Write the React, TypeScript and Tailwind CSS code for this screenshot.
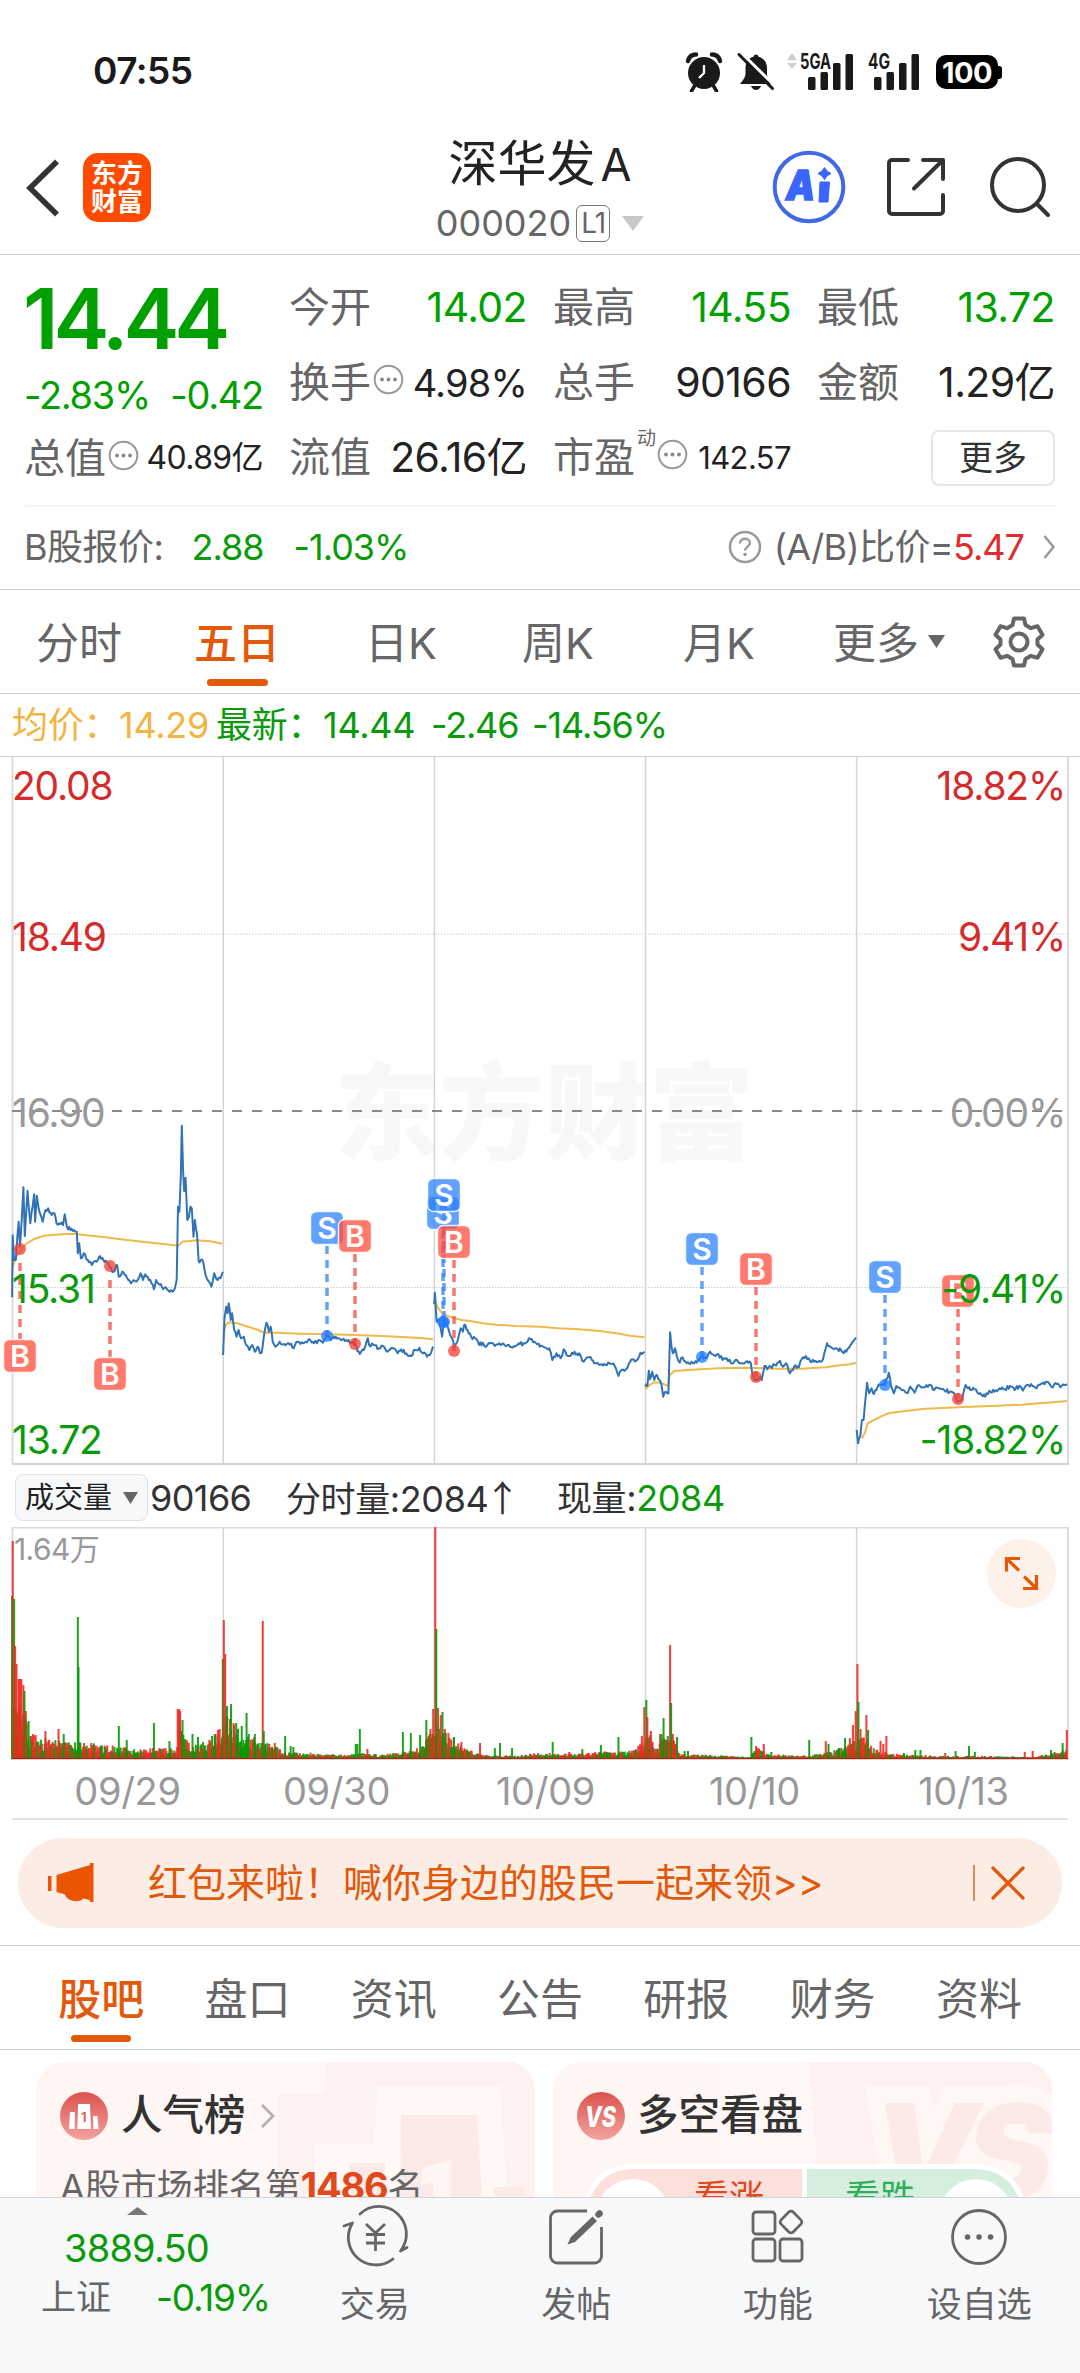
import type { ReactNode } from 'react';

const FONT = 'font-["Inter","Noto_Sans_CJK_SC",sans-serif]';

/* ---------- chart data ---------- */

type Point = [number, number];

// Samples are stored on a fine grid, HALF is the offset of the second half of the window
const HALF = 1568;
const toX = (x: number) => x / 2.904;
const toY = (y: number) => 1080 + y / 3;

const parse = (raw: string, offset = 0): Point[] =>
  raw.trim().split(/\s+/).map((pair) => {
    const [x, y] = pair.split(',').map(Number);
    return [toX(x + offset), toY(y)];
  });

const makeRandom = (seed: number) => {
  let s = seed;
  return () => {
    s = (s * 16807) % 2147483647;
    return s / 2147483647;
  };
};

const priceDays: Point[][] = [
  parse(`35,652 37,466 41,540 46,540 54,425 58,500 63,420 68,322 72,468 80,332 88,430 99,343 102,425 107,347 112,385 120,410
    124,425 132,390 140,385 150,405 158,400 164,430 172,430 183,435 188,403 194,440 205,450 215,450 223,455 226,520 230,490
    235,535 243,520 255,540 262,545 267,555 280,545 290,528 300,540 310,545 318,560 330,575 340,555 345,590 355,575 365,585
    380,610 388,600 400,600 408,580 415,600 422,583 432,600 440,610 447,628 453,600 460,610 470,620 485,628 500,635 508,625
    513,600 517,380 521,395 525,290 528,137 532,280 535,333 539,293 544,420 549,410 553,380 557,385 562,470 566,420 572,460
    577,545 583,540 590,545 597,585 603,600 614,620 622,580 628,597 640,595 647,575`),
  parse(`648,825 652,715 657,680 661,700 664,670 670,720 674,700 680,750 687,770 693,750 700,775 708,770 715,795 724,810 733,795
    740,815 748,800 755,820 760,818 766,770 774,728 781,755 786,740 792,785 800,800 812,785 825,792 838,790 853,805 865,785
    880,790 895,780 912,790 925,780 938,788 949,765 960,780 975,770 990,780 1005,780 1020,788 1031,795 1045,822 1060,802
    1068,775 1072,795 1085,795 1100,805 1115,800 1125,815 1140,805 1155,820 1165,808 1180,820 1195,828 1205,810 1218,803
    1228,820 1240,830 1252,818 1258,800`),
  parse(`1261,672 1263,638 1268,725 1276,725 1284,770 1290,715 1300,740 1307,765 1315,780 1320,800 1328,785 1338,745 1344,755
    1348,735 1358,750 1368,770 1380,775 1392,795 1402,788 1412,800 1425,790 1437,798 1450,790 1465,795 1478,795 1488,803
    1503,795 1520,790 1540,778 1560,793 1580,802 1595,805 1604,840 1616,820 1628,835 1637,808 1645,825 1665,822 1682,820
    1695,845 1708,832 1722,842 1740,855 1755,852 1770,850 1785,858 1796,888 1805,870 1818,868 1830,845 1840,838 1848,842
    1860,818 1872,815`),
  parse(`306,920 312,918 316,872 320,898 326,875 332,900 340,885 347,900 353,915 358,950 366,935 373,940 376,830 378,757 382,800
    386,820 392,805 398,830 406,848 414,832 426,850 440,845 455,848 470,830 482,835 494,815 505,825 518,822 530,840 542,835
    555,850 568,840 582,850 598,845 612,848 618,885 626,900 636,893 644,900 652,858 660,868 670,860 682,855 697,842 706,860
    715,850 726,880 738,860 752,862 760,838 772,828 785,845 800,842 815,845 822,838 834,790 845,802 860,805 875,812 890,815
    900,798 918,773`, HALF),
  parse(`920,1050 924,1090 930,1070 935,1020 940,1020 944,970 950,908 956,940 963,925 970,942 980,922 990,915 1002,915 1013,878
    1020,920 1028,940 1035,918 1050,930 1068,940 1075,920 1088,938 1100,915 1115,922 1130,915 1145,930 1160,925 1175,932
    1190,935 1203,940 1212,965 1224,960 1236,915 1250,930 1262,928 1275,942 1293,950 1305,932 1320,935 1335,925 1350,928
    1365,918 1378,930 1392,918 1402,932 1415,915 1430,918 1442,925 1455,912 1472,905 1485,920 1500,912 1515,918 1531,912`, HALF),
];

const averageDays: Point[][] = [
  parse('38,560 45,535 58,515 75,492 100,477 125,468 155,464 215,461 250,466 300,471 350,478 420,486 480,493 517,497 530,485 570,481 610,484 647,491'),
  parse('650,755 656,735 664,727 690,730 720,740 750,750 766,758 800,758 870,761 950,763 1030,765 1110,768 1180,772 1230,775 1258,778'),
  parse('1263,660 1270,680 1284,700 1310,712 1340,720 1370,724 1400,730 1440,734 1500,738 1570,740 1620,745 1680,748 1740,753 1790,760 1830,767 1872,772'),
  parse('306,928 318,915 332,907 350,908 372,918 377,885 390,873 440,869 520,865 600,863 680,866 760,866 830,862 870,856 900,853 918,848', HALF),
  parse('935,1075 943,1060 952,1030 985,1012 1012,1000 1060,993 1120,986 1230,981 1330,977 1400,974 1450,970 1490,967 1531,963', HALF),
];

const round = (n: number) => n.toFixed(1);
const toPath = (pts: Point[]) => pts.map(([x, y], i) => `${i ? 'L' : 'M'}${round(x)} ${round(y)}`).join('');

// minute ticks between two samples
const withTicks = (pts: Point[], seed: number): Point[] => {
  const rnd = makeRandom(seed);
  const out: Point[] = [pts[0]];
  for (let i = 1; i < pts.length; i++) {
    const [x0, y0] = pts[i - 1];
    const [x1, y1] = pts[i];
    const steps = Math.max(1, Math.round((x1 - x0) / 1.3));
    for (let k = 1; k < steps; k++) {
      const t = k / steps;
      out.push([x0 + (x1 - x0) * t, y0 + (y1 - y0) * t + (rnd() - 0.5) * 4]);
    }
    out.push([x1, y1]);
  }
  return out;
};

const RED = '#ee2a24';
const GREEN = '#079807';

// [x, height] of the usual volume
const volumeBase: Point[] = [
  [35, 50], [70, 48], [85, 24], [120, 20], [180, 17], [240, 16], [300, 14], [340, 12], [400, 9], [480, 11], [512, 9], [520, 35], [540, 18],
  [570, 13], [600, 18], [645, 28], [655, 42], [690, 28], [740, 20], [790, 14], [830, 6], [900, 6], [1000, 4], [1060, 6], [1100, 4], [1180, 7],
  [1220, 12], [1250, 24], [1285, 35], [1310, 22], [1350, 11], [1400, 4], [1500, 3], [1568, 6], [1620, 5], [1680, 5], [1750, 7], [1840, 8],
  [1868, 16], [1885, 24], [1905, 9], [1930, 22], [1955, 20], [1975, 5], [2050, 4], [2180, 2], [2195, 12], [2225, 5], [2320, 3], [2390, 5],
  [2420, 8], [2470, 14], [2510, 24], [2540, 10], [2590, 5], [2640, 4], [2750, 3], [2840, 3], [2990, 2], [3030, 4], [3080, 9], [3099, 9],
];

const volumeSpikes: [number, number, 'r' | 'g'][] = [
  [35, 163, 'g'], [37, 218, 'r'], [41, 160, 'g'], [44, 113, 'r'], [48, 95, 'r'], [54, 80, 'r'], [58, 80, 'r'], [62, 80, 'r'], [68, 74, 'r'],
  [71, 68, 'g'], [75, 48, 'r'], [83, 38, 'g'], [132, 28, 'r'], [170, 30, 'r'], [185, 25, 'g'], [226, 142, 'g'], [228, 92, 'g'],
  [345, 33, 'g'], [368, 19, 'g'], [447, 36, 'g'], [492, 18, 'g'], [516, 50, 'r'], [520, 50, 'r'], [523, 48, 'r'], [530, 39, 'g'],
  [559, 25, 'g'], [575, 22, 'g'], [625, 23, 'g'], [633, 29, 'r'], [638, 30, 'r'], [647, 100, 'g'], [650, 139, 'r'], [654, 105, 'r'],
  [659, 53, 'g'], [671, 55, 'g'], [680, 34, 'r'], [686, 36, 'g'], [702, 33, 'g'], [716, 46, 'g'], [740, 25, 'g'], [763, 138, 'r'],
  [766, 28, 'g'], [798, 16, 'r'], [828, 23, 'g'], [844, 13, 'g'], [852, 12, 'g'], [1033, 15, 'g'], [1038, 15, 'g'], [1045, 30, 'g'],
  [1067, 10, 'r'], [1170, 27, 'g'], [1193, 26, 'g'], [1220, 24, 'g'], [1238, 39, 'g'], [1250, 30, 'r'], [1258, 50, 'r'], [1264, 232, 'r'],
  [1267, 130, 'g'], [1272, 51, 'r'], [1280, 44, 'r'], [1285, 47, 'g'], [1318, 22, 'g'], [1340, 17, 'r'], [1394, 16, 'r'], [1437, 11, 'g'],
  [1452, 16, 'g'], [1487, 11, 'g'], [1605, 17, 'g'], [1653, 7, 'r'], [1691, 10, 'g'], [1745, 14, 'g'], [1796, 22, 'g'], [1864, 23, 'r'],
  [1871, 52, 'r'], [1877, 59, 'g'], [1880, 42, 'r'], [1890, 28, 'r'], [1917, 25, 'r'], [1921, 25, 'g'], [1927, 41, 'g'], [1946, 114, 'r'],
  [1949, 56, 'g'], [1954, 25, 'r'], [1966, 22, 'g'], [1988, 8, 'g'], [1998, 8, 'g'], [2182, 22, 'g'], [2196, 13, 'r'], [2218, 15, 'r'],
  [2240, 7, 'g'], [2350, 19, 'g'], [2398, 18, 'r'], [2406, 15, 'g'], [2436, 11, 'g'], [2454, 21, 'g'], [2468, 21, 'r'], [2477, 34, 'r'],
  [2485, 48, 'r'], [2490, 95, 'r'], [2493, 57, 'g'], [2499, 30, 'r'], [2516, 44, 'r'], [2521, 29, 'g'], [2557, 18, 'r'], [2565, 15, 'r'],
  [2574, 23, 'r'], [2625, 6, 'g'], [2658, 9, 'g'], [2673, 9, 'g'], [2745, 6, 'r'], [2775, 8, 'g'], [2814, 13, 'g'], [2831, 7, 'g'],
  [2976, 7, 'r'], [2999, 8, 'r'], [3052, 9, 'g'], [3086, 16, 'g'], [3098, 29, 'r'],
];

const baseAt = (x: number) => {
  const i = volumeBase.findIndex(([px]) => px >= x);
  if (i <= 0) return volumeBase[0][1];
  const [x0, h0] = volumeBase[i - 1];
  const [x1, h1] = volumeBase[i];
  return h0 + ((h1 - h0) * (x - x0)) / (x1 - x0);
};

const volumeBars = (() => {
  const rnd = makeRandom(7919);
  const bars: { x: number; h: number; c: string }[] = [];
  for (let x = 36; x < 3098; x += 2.6) {
    const up = rnd() > 0.48;
    const r = rnd();
    bars.push({ x: toX(x), h: Math.max(1.5, baseAt(x) * (0.4 + r * 0.7)), c: up ? RED : GREEN });
  }
  volumeSpikes.forEach(([x, h, c]) => bars.push({ x: toX(x), h, c: c === 'r' ? RED : GREEN }));
  return bars;
})();

const marks = [
  { t: 'B', x: 20, y: 1356, dot: 1249 },
  { t: 'B', x: 110, y: 1374, dot: 1266 },
  { t: 'S', x: 327, y: 1228, dot: 1336 },
  { t: 'B', x: 355, y: 1236, dot: 1344 },
  { t: 'S', x: 443, y: 1213, dot: 1322 },
  { t: 'S', x: 444, y: 1195, dot: 1322 },
  { t: 'B', x: 454, y: 1242, dot: 1351 },
  { t: 'S', x: 702, y: 1249, dot: 1357 },
  { t: 'B', x: 756, y: 1269, dot: 1377 },
  { t: 'S', x: 885, y: 1277, dot: 1385 },
  { t: 'B', x: 958, y: 1291, dot: 1399 },
];

const axis = [
  { y: 800, left: '20.08', right: '18.82%', fill: '#d52b2b' },
  { y: 951, left: '18.49', right: '9.41%', fill: '#d52b2b' },
  { y: 1127, left: '16.90', right: '0.00%', fill: '#999999' },
  { y: 1303, left: '15.31', right: '-9.41%', fill: '#0a9a0a' },
  { y: 1454, left: '13.72', right: '-18.82%', fill: '#0a9a0a' },
];

const dayLines = [223.3, 434.4, 645.5, 856.6];

/* ---------- pieces ---------- */

const Dots = () => (
  <svg className="shrink-0" width="31" height="31" viewBox="0 0 31 31" fill="none">
    <circle cx="15.5" cy="15.5" r="13.8" stroke="#999" strokeWidth="2" />
    <circle cx="9" cy="15.5" r="1.9" fill="#888" />
    <circle cx="15.5" cy="15.5" r="1.9" fill="#888" />
    <circle cx="22" cy="15.5" r="1.9" fill="#888" />
  </svg>
);

const Signal = ({ label, arrows }: { label: string; arrows?: boolean }) => (
  <svg className="overflow-visible" width="68" height="40" viewBox="0 0 68 40" fill="#1a1a1a">
    {arrows && <path d="M7 1 12 8H2ZM2 11h10l-5 6Z" fill="#cfcfcf" />}
    <text x={arrows ? 15 : 17} y="17" fontSize="21" fontWeight="700" textLength={arrows ? 31 : 22} lengthAdjust="spacingAndGlyphs">{label}</text>
    <rect x="23" y="25" width="7.5" height="13" rx="1.5" />
    <rect x="35.5" y="20" width="7.5" height="18" rx="1.5" />
    <rect x="48" y="11" width="7.5" height="27" rx="1.5" />
    <rect x="60.5" y="2" width="7.5" height="36" rx="1.5" />
  </svg>
);

const StatusBar = () => (
  <div className="h-[96px] flex items-end justify-between pl-[93px] pr-[78px]">
    <span className="h-[49px] flex items-start pt-[5px] text-[37px] leading-none font-semibold tracking-[-0.5px] text-[#1a1a1a]">07:55</span>
    <div className="h-[48px] flex items-center">
      <svg width="38" height="40" viewBox="0 0 38 40" fill="none">
        <circle cx="19" cy="21" r="16" fill="#1a1a1a" />
        <path d="M3 9C4 5 7 2.5 11 2.5M27 2.5C31 2.5 34 5 35 9" stroke="#1a1a1a" strokeWidth="4.5" strokeLinecap="round" />
        <path d="m9.5 34-3 5M28.5 34l3 5" stroke="#1a1a1a" strokeWidth="3.5" strokeLinecap="round" />
        <path d="M19 13v8l-5 5" stroke="#fff" strokeWidth="2.3" />
      </svg>
      <svg className="ml-[14px]" width="38" height="40" viewBox="0 0 38 40">
        <path d="M19 2.5c1.5 0 2.5 1 2.5 2.3C27 6 30 10.5 30 16v6c0 3 1.5 5 5 10H3c3-4 5.5-7 5.5-10v-6C8.5 10.5 11.5 6 16.5 4.800 16.5 3.5 17.5 2.5 19 2.5Z" fill="#1a1a1a" />
        <path d="M14 34h10c-1 2.7-3 4-5 4s-4-1.3-5-4Z" fill="#1a1a1a" />
        <path d="M4 .5 39 35" stroke="#fff" strokeWidth="3" />
        <path d="M2 2.5 35.5 36.5" stroke="#1a1a1a" strokeWidth="3" strokeLinecap="round" />
      </svg>
      <div className="ml-[10px]"><Signal label="5GA" arrows /></div>
      <div className="-ml-[2px]"><Signal label="4G" /></div>
      <div className="ml-[17px] flex items-center">
        <div className="w-[62px] h-[34px] rounded-[10px] bg-black text-white text-[29px] leading-none font-bold flex items-center justify-center tracking-[-0.5px]">100</div>
        <div className="w-[4px] h-[13px] rounded-r-[3px] bg-black" />
      </div>
    </div>
  </div>
);

const Header = () => (
  <div className="h-[159px] border-b border-[#d0d0d0] flex items-start">
    <div className="w-[330px] flex items-center pl-[24px] pt-[57px]">
      <svg width="36" height="58" viewBox="0 0 36 58" fill="none" stroke="#333" strokeWidth="5.5">
        <path d="M33 2.5 6 29l27 26.500" />
      </svg>
      <div className="ml-[23px] w-[68px] h-[69px] rounded-[15px] bg-[#ff4a00] text-white text-[26px] font-bold leading-[28px] flex flex-col items-center justify-center">
        <span>东方</span>
        <span>财富</span>
      </div>
    </div>
    <div className="w-[420px] flex flex-col items-center pt-[40px]">
      <div className="text-[49px] leading-[56px] text-[#222]">深华发<span className="ml-[5px] text-[45px]">A</span></div>
      <div className="mt-[11px] flex items-center h-[38px] text-[#666] pl-[-2px]">
        <span className="text-[36px] leading-none">000020</span>
        <span className="ml-[5px] w-[34px] h-[37px] rounded-[6px] border border-[#777] text-[28px] leading-none flex items-center justify-center tracking-[-1px]">L1</span>
        <svg className="ml-[12px]" width="22" height="15" viewBox="0 0 22 15"><path d="M0 0h22L11 15Z" fill="#c8c8c8" /></svg>
      </div>
    </div>
    <div className="flex items-center pl-[22px] pt-[54px]">
      <svg width="74" height="74" viewBox="0 0 74 74" fill="none">
        <circle cx="37" cy="37" r="34.3" stroke="#4169e6" strokeWidth="4" />
        <text x="14" y="50" fontSize="41" fontWeight="900" fontStyle="italic" fill="#3a66ff" stroke="#3a66ff" strokeWidth="1.5" textLength="29" lengthAdjust="spacingAndGlyphs">A</text>
        <path d="M48 32h9.500l-1.500 20h-9Z" fill="#3a66ff" stroke="#3a66ff" strokeLinejoin="round" />
        <path d="M52.5 17.500 55 21l4 2.500-4 2.500-2.500 3.500L50 26l-4-2.500 4-2.500Z" fill="#3a66ff" stroke="#3a66ff" strokeLinejoin="round" />
      </svg>
      <svg className="ml-[40px]" width="60" height="62" viewBox="0 0 60 62" fill="none" stroke="#333" strokeWidth="4" strokeLinecap="round" strokeLinejoin="round">
        <path d="M22 4H6a3 3 0 0 0-3 3v48a3 3 0 0 0 3 3h48a3 3 0 0 0 3-3V39M37 4h20v19M57 4 28 32.500" />
      </svg>
      <svg className="ml-[42px]" width="64" height="64" viewBox="0 0 64 64" fill="none" stroke="#333" strokeWidth="4" strokeLinecap="round">
        <circle cx="30" cy="30" r="26" />
        <path d="m49 49 11 11" />
      </svg>
    </div>
  </div>
);

interface StatProps {
  label: string;
  value: string;
  color?: string;
  size?: string;
  info?: boolean;
  sup?: string;
}

const Stat = ({ label, value, color = 'text-[#222]', size = 'text-[41px] tracking-[-0.6px]', info, sup }: StatProps) => (
  <div className="flex items-center justify-between">
    <div className="flex items-center text-[#666]">
      <span className="text-[41px] leading-none">{label}</span>
      {sup && <span className="text-[19px] leading-none self-start -mt-[8px] ml-[2px] -mr-[1px]">{sup}</span>}
      {info && <div className="ml-[2px] -mt-[6px]"><Dots /></div>}
    </div>
    <span className={`leading-none ${size} ${color}`}>{value}</span>
  </div>
);

const Quote = () => (
  <div className="h-[335px] border-b border-[#d0d0d0] pl-[25px] pr-[24px]">
    <div className="h-[250px] flex gap-[26px] pt-[15px]">
      <div className="w-[238px] flex flex-col text-[#00a000]">
        <div className="h-[98px] -ml-[2px] flex items-center text-[84px] leading-none font-semibold tracking-[-5px]">14.44</div>
        <div className="h-[53px] -ml-[1px] flex items-center justify-between text-[38px] leading-none tracking-[-1.3px]">
          <span>-2.83%</span>
          <span>-0.42</span>
        </div>
        <div className="h-[74px] -ml-[1px] flex items-center [&>div]:flex-1">
          <Stat label="总值" value="40.89亿" size="text-[32px] tracking-[-0.6px]" info />
        </div>
      </div>
      <div className="w-[766px] h-[225px] grid grid-cols-3 grid-rows-3 gap-x-[26px]">
        <Stat label="今开" value="14.02" color="text-[#00a000]" />
        <Stat label="最高" value="14.55" color="text-[#00a000]" />
        <Stat label="最低" value="13.72" color="text-[#00a000]" />
        <Stat label="换手" value="4.98%" size="text-[38px] tracking-[-0.8px]" info />
        <Stat label="总手" value="90166" />
        <Stat label="金额" value="1.29亿" />
        <Stat label="流值" value="26.16亿" />
        <Stat label="市盈" value="142.57" size="text-[31px] tracking-[-0.6px]" sup="动" info />
        <div className="flex items-center justify-end">
          <div className="w-[124px] h-[56px] rounded-[8px] border-2 border-[#e4e6e8] text-[34px] leading-none text-[#333] flex items-center justify-center">更多</div>
        </div>
      </div>
    </div>
    <div className="h-[2px] bg-[#f3f3f3]" />
    <div className="h-[80px] flex items-center justify-between text-[36px] leading-none text-[#666]">
      <div className="flex items-center -ml-[1px]">
        <span className="tracking-[-0.5px]">B股报价:</span>
        <span className="ml-[28px] text-[#0a9a0a] tracking-[-1px]">2.88</span>
        <span className="ml-[30px] text-[#0a9a0a] tracking-[-1px]">-1.03%</span>
      </div>
      <div className="flex items-center">
        <svg width="34" height="34" viewBox="0 0 34 34" fill="none">
          <circle cx="17" cy="17" r="15" stroke="#999" strokeWidth="2.5" />
          <path d="M12 13.5c0-6.5 10-6 10-.5 0 3.5-5 4-5 7.5" stroke="#999" strokeWidth="2.3" />
          <circle cx="17" cy="24.5" r="1.8" fill="#999" />
        </svg>
        <span className="ml-[12px] tracking-[-0.6px]">(A/B)比价=</span>
        <span className="text-[#e02c2c] tracking-[-1px]">5.47</span>
        <svg className="ml-[19px]" width="13" height="26" viewBox="0 0 13 26" fill="none" stroke="#999" strokeWidth="2.5"><path d="m1.5 2 9 11-9 11" /></svg>
      </div>
    </div>
  </div>
);

const periods = [
  { label: '分时', width: 'w-[158px]' },
  { label: '五日', width: 'w-[158px]', active: true },
  { label: '日K', width: 'w-[170px]' },
  { label: '周K', width: 'w-[144px]' },
  { label: '月K', width: 'w-[178px]' },
  { label: '更多', width: 'w-[162px]', caret: true },
];

const Periods = () => (
  <div className="h-[104px] border-b border-[#d0d0d0] flex items-center text-[43px] leading-none text-[#666]">
    {periods.map((p) => (
      <div key={p.label} className={`relative h-full flex items-center justify-center pt-[4px] ${p.width} ${p.active ? 'text-[#e2590c] font-medium' : ''}`}>
        {p.label}
        {p.caret && <svg className="ml-[9px] -mt-[5px]" width="17" height="13" viewBox="0 0 17 13"><path d="M0 0h17L8.5 13Z" fill="#666" /></svg>}
        {p.active && <div className="absolute bottom-[7px] w-[61px] h-[7px] rounded-full bg-[#e2590c]" />}
      </div>
    ))}
    <div className="w-[98px] flex justify-center">
      <svg width="54" height="54" viewBox="0 0 54 54" fill="none" stroke="#666" strokeWidth="4" strokeLinejoin="round">
        <path d="M22 3.5h10l1.5 6.5 5.5 3.2 6.5-2 5 8.600-5 4.700v5l5 4.700-5 8.600-6.500-2-5.500 3.200-1.500 6.500H22L20.500 44 15 40.800l-6.500 2-5-8.600 5-4.700v-5l-5-4.700 5-8.600 6.500 2 5.500-3.200Z" />
        <circle cx="27" cy="27" r="8.5" />
      </svg>
    </div>
  </div>
);

const PriceChart = () => (
  <div>
    <div className="h-[62px] flex items-center pl-[12px] text-[36px] leading-none tracking-[-0.3px] text-[#0a9a0a]">
      <span className="text-[#f2b544] w-[204px]">均价：14.29</span>
      <span className="w-[215px]">最新：14.44</span>
      <span className="w-[101px] tracking-[-1.2px]">-2.46</span>
      <span className="tracking-[-1.100px]">-14.56%</span>
    </div>
    <svg className="block" width="1080" height="712" viewBox="0 756 1080 712" fill="none">
      <text x="334" y="1151" fontSize="105" fontWeight="900" fill="#f8f8f8">东方财富</text>
      <path d="M0 756.5H1080" stroke="#d0d0d0" strokeWidth="1" />
      <path d="M12 934H1068M12 1287.5H1068" stroke="#ccc" strokeWidth="1" strokeDasharray="1.5 1.5" />
      <path d="M12.5 757V1464M1068 757V1464" stroke="#dcdcdc" strokeWidth="2" />
      {dayLines.map((x) => <path key={x} d={`M${x} 757V1464`} stroke="#d4d4d4" strokeWidth="1.5" />)}
      <path d="M12 1464H1069" stroke="#d4d4d4" strokeWidth="2" />
      <path d="M12 1111H1068" stroke="#8a8a8a" strokeWidth="2" strokeDasharray="10 10" />
      {averageDays.map((d, i) => <path key={i} d={toPath(d)} stroke="#f0b94c" strokeWidth="2" />)}
      {priceDays.map((d, i) => <path key={i} d={toPath(withTicks(d, 131 + i * 77))} stroke="#3273b5" strokeWidth="2" strokeLinejoin="round" />)}
      {marks.map((m, i) => {
        const sell = m.t === 'S';
        const up = m.y < m.dot;
        return (
          <g key={i}>
            <path d={up ? `M${m.x} ${m.y + 18}V${m.dot}` : `M${m.x} ${m.dot + 14}V${m.y - 16}`} stroke={sell ? '#3d8bf2' : '#f0564a'} strokeOpacity="0.8" strokeWidth="3.5" strokeDasharray="8 6" />
            <circle cx={m.x} cy={m.dot} r="6" fill={sell ? '#1f7bff' : '#f23e30'} fillOpacity="0.75" />
            <rect x={m.x - 16.5} y={m.y - 16.5} width="33" height="33" rx="6" fill={sell ? '#2a80ff' : '#ff4a38'} fillOpacity="0.74" stroke="#fff" strokeOpacity="0.85" strokeWidth="1.5" />
            <text x={m.x} y={m.y + 11} textAnchor="middle" fontSize="30" fontWeight="600" fill="#fff">{m.t}</text>
          </g>
        );
      })}
      {axis.map((a) => (
        <g key={a.left} fill={a.fill} fontSize="39" letterSpacing="-1.2">
          <text x="12" y={a.y}>{a.left}</text>
          <text x="1065" y={a.y} textAnchor="end">{a.right}</text>
        </g>
      ))}
    </svg>
  </div>
);

const VolumeChart = () => (
  <div>
    <div className="h-[59px] flex items-center pl-[15px] text-[36px] leading-none text-[#333]">
      <div className="w-[133px] h-[47px] rounded-[8px] border border-[#dfe2e6] bg-[#f7f8fa] text-[29px] text-[#222] flex items-center justify-center">
        成交量
        <svg className="ml-[11px]" width="15" height="12" viewBox="0 0 15 12"><path d="M0 0h15L7.5 12Z" fill="#666" /></svg>
      </div>
      <span className="ml-[2px] w-[136px] tracking-[-0.6px]">90166</span>
      <span className="w-[271px] tracking-[-0.4px]"><span className="text-[35px]">分时量</span>:2084<span className='font-["Noto_Sans_CJK_SC"] -ml-[4px]'>↑</span></span>
      <span className="tracking-[-0.4px]"><span className="text-[35px]">现量</span>:<span className="text-[#0a9a0a]">2084</span></span>
    </div>
    <svg className="block" width="1080" height="234" viewBox="0 1527 1080 234" fill="none">
      <path d="M12.500 1760V1527.500H1068V1760" stroke="#dcdcdc" strokeWidth="2" />
      {dayLines.map((x) => <path key={x} d={`M${x} 1528V1759`} stroke="#d4d4d4" strokeWidth="1.5" />)}
      {volumeBars.map((b, i) => <rect key={i} x={b.x - 1} y={1759 - b.h} width="2" height={b.h} fill={b.c} fillOpacity="0.9" />)}
      <path d="M12 1758.500H1068" stroke="#9c2f1c" strokeWidth="1.5" />
      <text x="14" y="1560" fontSize="30" letterSpacing="-0.6" fill="#999">1.64万</text>
      <circle cx="1021.5" cy="1573.5" r="34.5" fill="#fef1ea" />
      <path d="M1006.500 1571.500V1558.500H1020M1007.500 1559.500l11.500 11M1036.500 1575v13.500H1023M1035.500 1587.500l-11.500-11" stroke="#e2590c" strokeWidth="3.2" />
    </svg>
    <div className="mx-[12px] h-[59px] border-b-[2px] border-[#e2e2e2] flex items-center pt-[2px] pl-[11px] text-[38px] leading-none tracking-[-0.3px] text-[#999]">
      {['09/29', '09/30', '10/09', '10/10', '10/13'].map((d) => (
        <span key={d} className="w-[209.5px] text-center">{d}</span>
      ))}
    </div>
  </div>
);

const Banner = () => (
  <div className="h-[126px] border-b border-[#d0d0d0] px-[18px] pt-[18px]">
    <div className="h-[90px] rounded-full bg-[#fcede4] flex items-center pl-[30px] pr-[37px] text-[#e2590c]">
      <svg width="46" height="40" viewBox="0 0 46 40" fill="#ea5504">
        <path d="M0 13h3.500v15H0ZM8.500 12 42 2V0h3.500v39H42v-2l-7-1.500c-3 4.500-16 3.500-18-4l-8.500-2.500Z" />
      </svg>
      <span className="ml-[54px] -mt-[2px] text-[39px] leading-none">红包来啦！喊你身边的股民一起来领&gt;&gt;</span>
      <div className="ml-auto w-[2px] h-[36px] bg-[#dc8a5c]" />
      <svg className="ml-[16px]" width="34" height="34" viewBox="0 0 34 34" stroke="#e2590c" strokeWidth="3.3" strokeLinecap="round"><path d="m2 2 30 30M32 2 2 32" /></svg>
    </div>
  </div>
);

const Sections = () => (
  <div className="h-[104px] border-b border-[#d0d0d0] flex pl-[28px] text-[43px] leading-none text-[#666]">
    {['股吧', '盘口', '资讯', '公告', '研报', '财务', '资料'].map((s, i) => (
      <div key={s} className={`relative w-[146.3px] h-full flex items-center justify-center pt-[4px] ${i === 0 ? 'text-[#e2590c] font-medium' : ''}`}>
        {s}
        {i === 0 && <div className="absolute bottom-[7px] w-[60px] h-[7px] rounded-full bg-[#e2590c]" />}
      </div>
    ))}
  </div>
);

const Card = ({ children }: { children: ReactNode }) => (
  <div className="relative w-[499px] h-[180px] rounded-t-[28px] bg-gradient-to-r from-[#fff6f4] to-[#fff9f7] overflow-hidden">{children}</div>
);

const Cards = () => (
  <div className="h-[147px] pt-[12px] pl-[36px] flex gap-[18px] overflow-hidden">
    <Card>
      <svg className="absolute inset-0" width="499" height="180" viewBox="36 2062 499 180">
        <path d="M326 2062H535v150H279V2094h45Z" fill="#fef2f0" />
        <path d="M378 2086h122l8 130H314v-72h60Z" fill="#fff8f5" />
        <path d="M401 2115h76l6 100h-83ZM350 2163h35v50h-36ZM494 2187h31v30h-30Z" fill="#fceae8" />
        <path d="m422 2168 29-8v56h-18v-34l-12 3Z" fill="#fff5f2" />
      </svg>
      <div className="relative h-[108px] flex items-center pl-[24px]">
        <svg width="48" height="48" viewBox="0 0 48 48">
          <defs><linearGradient id="rank" x2="0" y2="1"><stop stopColor="#dc524e" /><stop offset="1" stopColor="#f2a39d" /></linearGradient></defs>
          <circle cx="24" cy="24" r="24" fill="url(#rank)" />
          <path d="M10 20h5l-.5 17H9ZM18 12h12l1 25H17.500ZM33 24h4.500l1 13h-5Z" fill="#fff" />
          <text x="21" y="30" fontSize="13" fontWeight="700" fill="#dc625c">1</text>
        </svg>
        <span className="ml-[13px] text-[41.5px] leading-none font-medium text-[#333]">人气榜</span>
        <svg className="ml-[14px]" width="15" height="26" viewBox="0 0 15 26" fill="none" stroke="#b5b0af" strokeWidth="2.8"><path d="m2 2 11 11L2 24" /></svg>
      </div>
      <div className="relative pl-[24px] -mt-[3px] text-[36px] leading-[38px] text-[#666]">A股市场排名第<span className="text-[38px] font-bold text-[#e2481a] tracking-[-1.2px]">1486</span>名</div>
    </Card>
    <Card>
      <svg className="absolute inset-0" width="499" height="180" viewBox="553 2062 499 180">
        <path d="M809 2062H1052v180H824Z" fill="#fef1ef" />
        <text x="872" y="2199" fontSize="132" fontWeight="900" fontStyle="italic" letterSpacing="-12" fill="#fceae8" stroke="#fff7f4" strokeWidth="34" paintOrder="stroke">VS</text>
      </svg>
      <div className="relative h-[108px] flex items-center pl-[24px]">
        <svg width="48" height="48" viewBox="0 0 48 48">
          <circle cx="24" cy="24" r="24" fill="url(#rank)" />
          <text x="8" y="35" fontSize="29" fontWeight="800" fontStyle="italic" fill="#fff" textLength="31" lengthAdjust="spacingAndGlyphs">VS</text>
        </svg>
        <span className="ml-[12px] text-[41.5px] leading-none font-medium text-[#333]">多空看盘</span>
      </div>
      <div className="relative -mt-[6px] ml-[30px] w-[443px] h-[96px] rounded-full border-[5px] border-white bg-white flex gap-[5px] overflow-hidden text-[35px]">
        <div className="relative w-[214px] rounded-l-full bg-[#fddfdb] text-[#e2481a] overflow-hidden">
          <div className="absolute left-[8px] top-[10px] w-[74px] h-[74px] rounded-full bg-white" />
          <span className="absolute left-[106px] top-[11px] leading-none">看涨</span>
        </div>
        <div className="relative w-[214px] rounded-r-full bg-[#d5eedd] text-[#2fae5c] overflow-hidden">
          <div className="absolute right-[8px] top-[10px] w-[74px] h-[74px] rounded-full bg-white" />
          <span className="absolute left-[38px] top-[11px] leading-none">看跌</span>
        </div>
      </div>
    </Card>
  </div>
);

const ICON = { width: 66, height: 60, viewBox: '0 0 66 60', fill: 'none', stroke: '#666', strokeWidth: 2.8, strokeLinecap: 'round', strokeLinejoin: 'round' } as const;

const actions = [
  {
    label: '交易',
    icon: (
      <svg {...ICON} overflow="visible">
        <path d="M18 7A27.5 27.5 0 0 1 58.500 44l6.500-3.500M51 52A27.500 27.500 0 0 1 10.500 16L2 19" />
        <path d="m24 17 9.500 9L43 17M33.500 26v18M24 27.500h19M24 36h19" strokeLinecap="butt" />
      </svg>
    ),
  },
  {
    label: '发帖',
    icon: (
      <svg {...ICON}>
        <path d="M44 4H14.500a7 7 0 0 0-7 7v38a7 7 0 0 0 7 7h37a7 7 0 0 0 7-7V20" strokeLinecap="butt" />
        <path d="m24.500 37.500 3-7 22-21 4.500 4.500-22 21Z" fill="#666" stroke="none" />
        <path d="m55.500 7.500 1-1" strokeWidth="6.5" />
      </svg>
    ),
  },
  {
    label: '功能',
    icon: (
      <svg {...ICON}>
        <rect x="8" y="5" width="22" height="22" rx="3" />
        <rect x="8" y="32" width="22" height="22" rx="3" />
        <rect x="35" y="32" width="22" height="22" rx="3" />
        <rect x="37.5" y="6.5" width="17" height="17" rx="3" transform="rotate(45 46 15)" />
      </svg>
    ),
  },
  {
    label: '设自选',
    icon: (
      <svg {...ICON}>
        <circle cx="33" cy="30" r="26.5" />
        <path d="M21.500 30h.1M33 30h.1M44.500 30h.1" strokeWidth="5.5" />
      </svg>
    ),
  },
];

const BottomBar = () => (
  <div className="h-[176px] border-t border-[#d0d3d8] bg-[#f7f8fa] flex">
    <div className="w-[274px] pt-[9px] flex flex-col leading-none text-[#0a9a0a]">
      <svg className="ml-[127px]" width="21" height="8" viewBox="0 0 21 8"><path d="M0 8 10.500 0 21 8Z" fill="#777" /></svg>
      <span className="ml-[64px] mt-[14px] text-[38px] tracking-[-0.8px]">3889.50</span>
      <div className="flex items-center justify-between mt-[12px] pl-[41px] pr-[4px]">
        <span className="text-[35px] text-[#666]">上证</span>
        <span className="text-[37px] tracking-[-1.2px]">-0.19%</span>
      </div>
    </div>
    {actions.map((a) => (
      <div key={a.label} className="w-[201.5px] flex flex-col items-center pt-[9px] text-[35px] leading-none text-[#666]">
        {a.icon}
        <span className="mt-[20px]">{a.label}</span>
      </div>
    ))}
  </div>
);

const App = () => {
  return (
    <div className={`w-[1080px] h-[2373px] bg-white overflow-hidden whitespace-nowrap ${FONT}`}>
      <StatusBar />
      <Header />
      <Quote />
      <Periods />
      <PriceChart />
      <VolumeChart />
      <Banner />
      <Sections />
      <Cards />
      <BottomBar />
    </div>
  );
};

export default App;
